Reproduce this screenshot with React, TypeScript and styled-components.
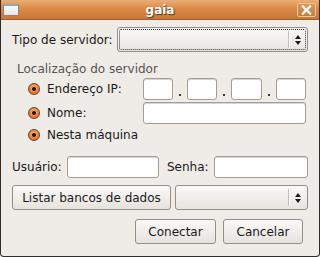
import styled, { createGlobalStyle } from 'styled-components';

const Global = createGlobalStyle`
  html, body { margin: 0; padding: 0; background: #efebe7; }
  body { font-family: "DejaVu Sans", "Liberation Sans", sans-serif; font-size: 12px; color: #1a1a1a; }
`;

const Window = styled.div`
  width: 320px;
  height: 257px;
  box-sizing: border-box;
  display: flex;
  flex-direction: column;
  background: #efebe7;
  border: 1px solid #2f2c29;
  border-top: none;
  border-radius: 0 0 4px 4px;
  overflow: hidden;
`;

const TitleBar = styled.div`
  height: 20px;
  margin: 0 -1px;
  flex-shrink: 0;
  display: flex;
  align-items: center;
  justify-content: space-between;
  padding: 0 2px;
  background: linear-gradient(#ecae74, #d88a45 45%, #c9783a);
  border-bottom: 1px solid #9d5b27;
  box-sizing: border-box;
  position: relative;
`;

const Title = styled.span`
  position: absolute;
  left: 0;
  right: 0;
  text-align: center;
  font-weight: bold;
  font-size: 12px;
  color: #ffffff;
  text-shadow: 1px 1px 1px #5a3514;
  pointer-events: none;
`;

const WinIcon = styled.div`
  width: 16px;
  height: 12px;
  margin-left: 1px;
  margin-top: 1px;
  background: linear-gradient(#fbfbfb, #e4e6ea);
  border: 1px solid #a08060;
  border-top: 2px solid #8ea4c4;
  box-sizing: border-box;
`;

const CloseBtn = styled.div`
  width: 19px;
  height: 14px;
  margin-right: 2px;
  box-sizing: border-box;
  border: 1px solid #f1c595;
  border-radius: 2px;
  background: linear-gradient(#d9965c, #c77d3f);
  display: flex;
  align-items: center;
  justify-content: center;
`;

const Content = styled.div`
  flex: 1;
  display: flex;
  flex-direction: column;
  padding: 7px 11px 0 11px;
`;

const Row = styled.div<{ $mt?: number }>`
  display: flex;
  align-items: center;
  margin-top: ${({ $mt }) => $mt ?? 0}px;
`;

const Label = styled.span<{ $w?: number; $pl?: number }>`
  white-space: nowrap;
  box-sizing: border-box;
  width: ${({ $w }) => ($w ? `${$w}px` : 'auto')};
  padding-left: ${({ $pl }) => $pl ?? 0}px;
  flex-shrink: 0;
`;

const Combo = styled.div<{ $focus?: boolean; $ml?: number }>`
  position: relative;
  height: 25px;
  flex: 1;
  margin-left: ${({ $ml }) => $ml ?? 0}px;
  box-sizing: border-box;
  border: 1px solid #958e87;
  border-radius: 3px;
  background: linear-gradient(#faf9f8, #e8e4e0);
  display: flex;
  justify-content: flex-end;
  align-items: center;
  &::before {
    content: '';
    display: ${({ $focus }) => ($focus ? 'block' : 'none')};
    position: absolute;
    inset: 1px;
    border: 1px dotted #3a3a3a;
    border-radius: 2px;
  }
`;

const ComboSep = styled.div`
  width: 1px;
  height: 17px;
  background: #c4beb8;
  border-right: 1px solid #fbfaf9;
  margin-right: 5px;
`;

const Arrows = styled.div`
  display: flex;
  flex-direction: column;
  gap: 2px;
  margin-right: 6px;
`;

const Tri = styled.div<{ $down?: boolean }>`
  width: 0;
  height: 0;
  border-left: 3px solid transparent;
  border-right: 3px solid transparent;
  ${({ $down }) => ($down ? 'border-top: 4px solid #1a1a1a;' : 'border-bottom: 4px solid #1a1a1a;')}
`;

const GroupTitle = styled.div`
  margin: 10px 0 0 5px;
  color: #575452;
  line-height: 14px;
`;

const RadioRow = styled.div<{ $mt?: number }>`
  display: flex;
  align-items: center;
  height: 22px;
  padding-left: 16px;
  margin-top: ${({ $mt }) => $mt ?? 0}px;
`;

const Radio = styled.span`
  width: 12px;
  height: 12px;
  box-sizing: border-box;
  border-radius: 50%;
  border: 1px solid #5e4630;
  background: radial-gradient(circle at 50% 40%, #ffb77a, #ec6e21 75%);
  display: flex;
  align-items: center;
  justify-content: center;
  margin-right: 7px;
  flex-shrink: 0;
  &::after {
    content: '';
    width: 4px;
    height: 4px;
    border-radius: 50%;
    background: #1c1410;
  }
`;

const RadioLabel = styled.span<{ $w?: number }>`
  width: ${({ $w }) => ($w ? `${$w}px` : 'auto')};
  flex-shrink: 0;
  white-space: nowrap;
`;

const Entry = styled.div<{ $w?: number }>`
  height: 22px;
  box-sizing: border-box;
  flex: ${({ $w }) => ($w ? `0 0 ${$w}px` : '1')};
  background: #ffffff;
  border: 1px solid #a39d96;
  border-radius: 3px;
  box-shadow: inset 0 1px 0 #d8d4d0;
`;

const Dot = styled.span`
  width: 14px;
  display: flex;
  justify-content: center;
  align-items: flex-end;
  height: 14px;
  &::after {
    content: '';
    width: 2px;
    height: 2px;
    background: #2a3a55;
  }
`;

const Button = styled.div<{ $w?: number }>`
  height: 25px;
  box-sizing: border-box;
  width: ${({ $w }) => ($w ? `${$w}px` : 'auto')};
  flex-shrink: 0;
  border: 1px solid #958e87;
  border-radius: 3px;
  background: linear-gradient(#faf9f8, #e6e2de);
  display: flex;
  align-items: center;
  justify-content: center;
  white-space: nowrap;
`;

const Actions = styled.div`
  display: flex;
  justify-content: flex-end;
  gap: 7px;
  margin-top: 9px;
  padding-right: 5px;
`;

function ComboArrows() {
  return (
    <>
      <ComboSep />
      <Arrows>
        <Tri />
        <Tri $down />
      </Arrows>
    </>
  );
}

export default function App() {
  return (
    <Window>
      <Global />
      <TitleBar>
        <WinIcon />
        <Title>gaia</Title>
        <CloseBtn>
          <svg width="11" height="10" viewBox="0 0 11 10">
            <path d="M2 1.5 L9 8.5 M9 1.5 L2 8.5" stroke="#ffffff" strokeWidth="2.4" strokeLinecap="square" />
          </svg>
        </CloseBtn>
      </TitleBar>
      <Content>
        <Row>
          <Label $w={105}>Tipo de servidor:</Label>
          <Combo $focus>
            <ComboArrows />
          </Combo>
        </Row>
        <GroupTitle>Localização do servidor</GroupTitle>
        <RadioRow $mt={2}>
          <Radio />
          <RadioLabel $w={96}>Endereço IP:</RadioLabel>
          <Entry $w={30} />
          <Dot />
          <Entry $w={30} />
          <Dot />
          <Entry $w={31} />
          <Dot />
          <Entry $w={30} />
        </RadioRow>
        <RadioRow $mt={2}>
          <Radio />
          <RadioLabel $w={96}>Nome:</RadioLabel>
          <Entry $w={163} />
        </RadioRow>
        <RadioRow>
          <Radio />
          <RadioLabel>Nesta máquina</RadioLabel>
        </RadioRow>
        <Row $mt={10}>
          <Label $w={55}>Usuário:</Label>
          <Entry $w={92} />
          <Label $w={55} $pl={8}>Senha:</Label>
          <Entry />
        </Row>
        <Row $mt={7}>
          <Button $w={159}>Listar bancos de dados</Button>
          <Combo $ml={4}>
            <ComboArrows />
          </Combo>
        </Row>
        <Actions>
          <Button $w={81}>Conectar</Button>
          <Button $w={80}>Cancelar</Button>
        </Actions>
      </Content>
    </Window>
  );
}
